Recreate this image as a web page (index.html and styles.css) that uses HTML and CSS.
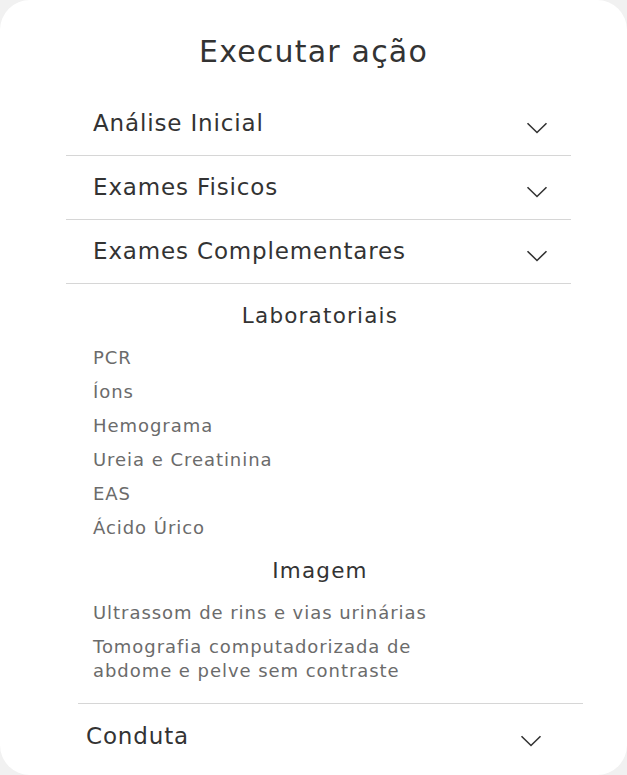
FILE: index.html
```html
<!DOCTYPE html>
<html lang="pt">
<head>
<meta charset="utf-8">
<title>Executar ação</title>
<link rel="stylesheet" href="styles.css">
</head>
<body>
<div class="card">
  <h1 class="title">Executar ação</h1>
  <div class="accordion">
    <div class="acc-head">
      <span class="acc-label">Análise Inicial</span>
      <svg class="chev" width="22" height="12" viewBox="0 0 22 12"><path d="M1.5 1.2 L11 10.5 L20.5 1.2" fill="none" stroke="#333" stroke-width="1.6"/></svg>
    </div>
    <div class="acc-head">
      <span class="acc-label">Exames Fisicos</span>
      <svg class="chev" width="22" height="12" viewBox="0 0 22 12"><path d="M1.5 1.2 L11 10.5 L20.5 1.2" fill="none" stroke="#333" stroke-width="1.6"/></svg>
    </div>
    <div class="acc-head">
      <span class="acc-label">Exames Complementares</span>
      <svg class="chev" width="22" height="12" viewBox="0 0 22 12"><path d="M1.5 1.2 L11 10.5 L20.5 1.2" fill="none" stroke="#333" stroke-width="1.6"/></svg>
    </div>
    <div class="acc-body">
      <h2 class="group-title">Laboratoriais</h2>
      <ul class="items">
        <li>PCR</li>
        <li>Íons</li>
        <li>Hemograma</li>
        <li>Ureia e Creatinina</li>
        <li>EAS</li>
        <li>Ácido Úrico</li>
      </ul>
      <h2 class="group-title group-gap">Imagem</h2>
      <ul class="items">
        <li>Ultrassom de rins e vias urinárias</li>
        <li>Tomografia computadorizada de abdome e pelve sem contraste</li>
      </ul>
    </div>
  </div>
  <div class="conduta">
    <span class="acc-label">Conduta</span>
    <svg class="chev" width="22" height="12" viewBox="0 0 22 12"><path d="M1.5 1.2 L11 10.5 L20.5 1.2" fill="none" stroke="#333" stroke-width="1.6"/></svg>
  </div>
</div>
</body>
</html>
```

FILE: styles.css
```css
* { box-sizing: border-box; }
html, body { margin: 0; padding: 0; }
body {
  background: #f1f1f1;
  font-family: "DejaVu Sans", "Open Sans", sans-serif;
  color: #333;
}
.card {
  width: 627px;
  height: 775px;
  background: #fff;
  border-radius: 30px;
  overflow: hidden;
}
.title {
  margin: 0;
  padding-top: 34px;
  height: 92px;
  text-align: center;
  font-weight: normal;
  font-size: 30px;
  line-height: 36px;
  letter-spacing: 1.2px;
  color: #333;
}
.accordion {
  margin-left: 66px;
  width: 505px;
}
.acc-head {
  display: flex;
  align-items: center;
  justify-content: space-between;
  height: 64px;
  padding: 0 23px 1px 27px;
  border-bottom: 1px solid #d6d6d6;
}
.acc-label {
  font-size: 23px;
  line-height: 30px;
  color: #333;
  letter-spacing: 0.85px;
}
.chev { margin-top: 10px; display: block; }
.acc-body {
  padding: 17px 0 20px 0;
}
.group-title {
  margin: 0;
  padding-left: 3px;
  text-align: center;
  font-weight: normal;
  font-size: 21.5px;
  line-height: 30px;
  color: #333;
  letter-spacing: 1.2px;
}
.group-gap { margin-top: 16px; }
.items {
  list-style: none;
  margin: 15px 0 0 27px;
  padding: 0;
  max-width: 360px;
  display: flex;
  flex-direction: column;
  gap: 10px;
}
.items li {
  font-size: 18px;
  line-height: 24px;
  color: #6b6b6b;
  letter-spacing: 0.95px;
}
.conduta {
  margin-left: 78px;
  width: 505px;
  height: 64px;
  display: flex;
  align-items: center;
  justify-content: space-between;
  padding: 0 41px 0 8px;
  border-top: 1px solid #d6d6d6;
}
```
